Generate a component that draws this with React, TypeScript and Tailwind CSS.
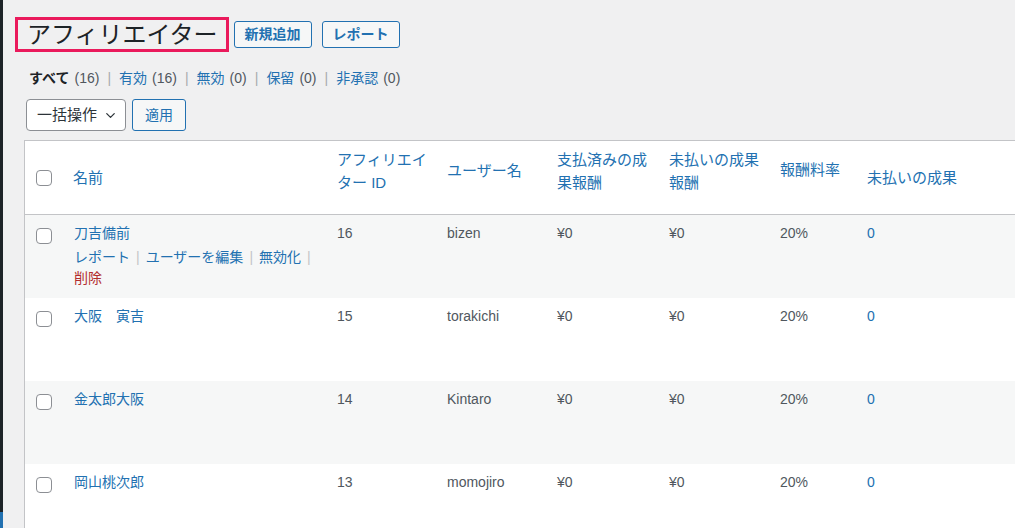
import { ChevronDown } from 'lucide-react'
import React from 'react'

type Affiliate = {
  name: string
  id: number
  username: string
  paid: string
  unpaid: string
  rate: string
  referrals: number
  actions?: boolean
}

const affiliates: Affiliate[] = [
  { name: '刀吉備前', id: 16, username: 'bizen', paid: '¥0', unpaid: '¥0', rate: '20%', referrals: 0, actions: true },
  { name: '大阪　寅吉', id: 15, username: 'torakichi', paid: '¥0', unpaid: '¥0', rate: '20%', referrals: 0 },
  { name: '金太郎大阪', id: 14, username: 'Kintaro', paid: '¥0', unpaid: '¥0', rate: '20%', referrals: 0 },
  { name: '岡山桃次郎', id: 13, username: 'momojiro', paid: '¥0', unpaid: '¥0', rate: '20%', referrals: 0 },
]

const filters = [
  { label: 'すべて', count: 16, current: true },
  { label: '有効', count: 16 },
  { label: '無効', count: 0 },
  { label: '保留', count: 0 },
  { label: '非承認', count: 0 },
]

const font = "font-['Liberation_Sans','Noto_Sans_CJK_JP',sans-serif]"

const Checkbox = () => (
  <span className="block h-4 w-4 rounded-[4px] border border-[#8c8f94] bg-white" />
)

const Sep = () => <span className="mx-[6px] text-[#c3c4c7]">|</span>

export default function App() {
  return (
    <div className={`flex h-[528px] w-[1015px] overflow-hidden bg-[#f0f0f1] ${font} text-[14px] text-[#3c434a]`}>
      <div className="flex h-full w-[3px] flex-col bg-[#1d2327]">
        <div className="flex-1" />
        <div className="h-4 bg-[#2271b1]" />
      </div>

      <main className="min-w-0 flex-1 overflow-hidden pl-[21px]">
        <div className="mt-[17px] flex items-center">
          <h1 className="-ml-[9px] h-[35px] border-[3px] border-[#ea1a5c] pl-[9px] pr-[8px] text-[24px] leading-[29px] font-normal text-[#1d2327]">
            アフィリエイター
          </h1>
          <button className="ml-[5px] h-[27px] rounded-[3px] border border-[#2271b1] bg-[#f6f7f7] px-[10px] text-[14px] font-semibold text-[#2271b1]">
            新規追加
          </button>
          <button className="ml-[10px] h-[27px] rounded-[3px] border border-[#2271b1] bg-[#f6f7f7] px-[10px] text-[14px] font-semibold text-[#2271b1]">
            レポート
          </button>
        </div>

        <div className="mt-[16px] ml-[5px] flex items-center leading-5">
          {filters.map((f, i) => (
            <React.Fragment key={f.label}>
              {i > 0 && <span className="mx-[8px] text-[#a7aaad]">|</span>}
              <span className={f.current ? 'font-bold text-[#1d2327]' : 'text-[#2271b1]'}>{f.label}</span>
              <span className="ml-[5px] text-[#50575e]">({f.count})</span>
            </React.Fragment>
          ))}
        </div>

        <div className="mt-[11px] ml-[2px] flex items-center gap-[6px]">
          <div className="flex h-8 w-[100px] items-center justify-between rounded-[4px] border border-[#8c8f94] bg-white pl-[10px] pr-[7px] text-[15px] text-[#2c3338]">
            <span>一括操作</span>
            <ChevronDown size={15} strokeWidth={2} className="text-[#2c3338]" />
          </div>
          <button className="h-8 rounded-[3px] border border-[#2271b1] bg-[#f6f7f7] px-[12px] text-[14px] text-[#2271b1]">
            適用
          </button>
        </div>

        <div className="mt-[9px] w-[1040px] border-t border-l border-[#c3c4c7] bg-white">
          <div className="flex h-[74px] items-center border-b border-[#c3c4c7] pb-[14px] text-[15px] leading-[23px] whitespace-nowrap text-[#2271b1]">
            <div className="w-[39px] shrink-0 pl-[11px] pt-[14px]">
              <Checkbox />
            </div>
            <div className="w-[263px] shrink-0 pl-[9px] pt-[14px]">名前</div>
            <div className="w-[110px] shrink-0 pl-[10px]">
              アフィリエイ
              <br />
              ター ID
            </div>
            <div className="w-[110px] shrink-0 pl-[10px]">ユーザー名</div>
            <div className="w-[112px] shrink-0 pl-[10px]">
              支払済みの成
              <br />
              果報酬
            </div>
            <div className="w-[111px] shrink-0 pl-[10px]">
              未払いの成果
              <br />
              報酬
            </div>
            <div className="w-[87px] shrink-0 pl-[10px] pb-[3px]">報酬料率</div>
            <div className="flex-1 pl-[10px] pt-[14px]">未払いの成果</div>
          </div>

          {affiliates.map((a, i) => (
            <div
              key={a.id}
              className={`flex h-[83px] items-start leading-5 ${i % 2 === 0 ? 'bg-[#f6f7f7]' : 'bg-white'}`}
            >
              <div className="w-[39px] shrink-0 pl-[11px] pt-[13px]">
                <Checkbox />
              </div>
              <div className="w-[263px] shrink-0 pl-[10px] pt-2">
                <div className="text-[#2271b1]">{a.name}</div>
                {a.actions && (
                  <div className="mt-1 leading-[21px]">
                    <div className="flex items-center">
                      <span className="text-[#2271b1]">レポート</span>
                      <Sep />
                      <span className="text-[#2271b1]">ユーザーを編集</span>
                      <Sep />
                      <span className="text-[#2271b1]">無効化</span>
                      <Sep />
                    </div>
                    <div className="text-[#b32d2e]">削除</div>
                  </div>
                )}
              </div>
              <div className="w-[110px] shrink-0 pl-[10px] pt-2 text-[#50575e]">{a.id}</div>
              <div className="w-[110px] shrink-0 pl-[10px] pt-2 text-[#50575e]">{a.username}</div>
              <div className="w-[112px] shrink-0 pl-[10px] pt-2 text-[#50575e]">{a.paid}</div>
              <div className="w-[111px] shrink-0 pl-[10px] pt-2 text-[#50575e]">{a.unpaid}</div>
              <div className="w-[87px] shrink-0 pl-[10px] pt-2 text-[#50575e]">{a.rate}</div>
              <div className="flex-1 pl-[10px] pt-2 text-[#2271b1]">{a.referrals}</div>
            </div>
          ))}
        </div>
      </main>
    </div>
  )
}
